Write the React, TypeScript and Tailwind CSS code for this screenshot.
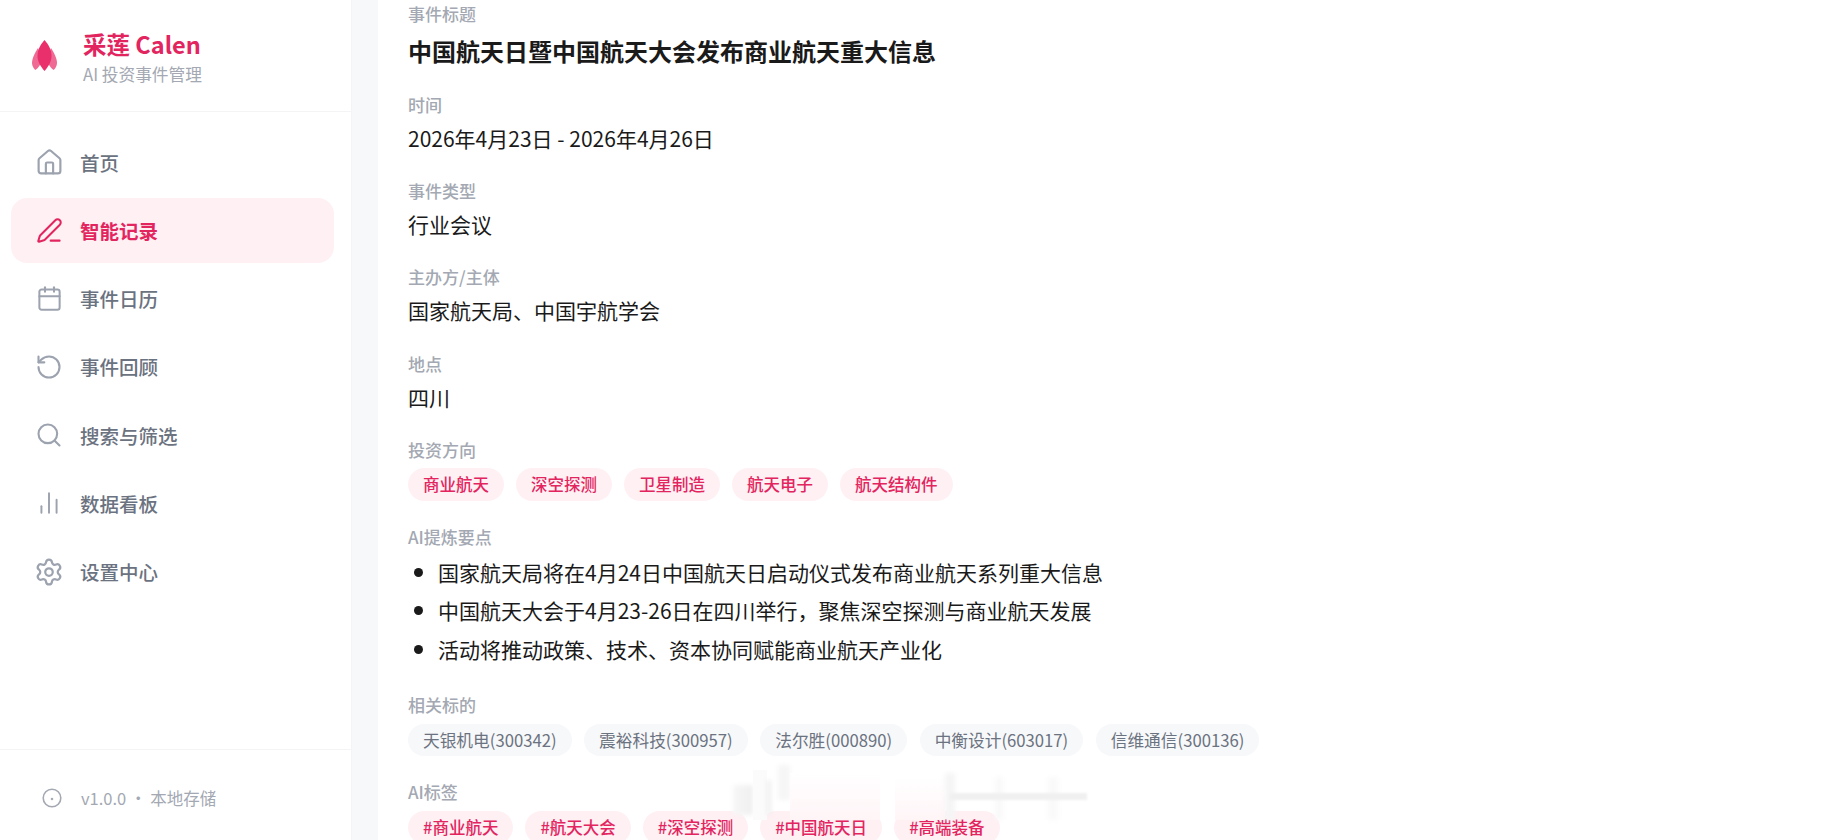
import { Calendar, ChartNoAxesColumn, Home, PenLine, RotateCcw, Search, Settings } from "lucide-react";

const navItems = [
  { label: "首页", icon: Home, size: 29 },
  { label: "智能记录", icon: PenLine, size: 27, active: true },
  { label: "事件日历", icon: Calendar, size: 27 },
  { label: "事件回顾", icon: RotateCcw, size: 28 },
  { label: "搜索与筛选", icon: Search, size: 28 },
  { label: "数据看板", icon: ChartNoAxesColumn, size: 26 },
  { label: "设置中心", icon: Settings, size: 32 },
];

const directions = ["商业航天", "深空探测", "卫星制造", "航天电子", "航天结构件"];
const points = [
  "国家航天局将在4月24日中国航天日启动仪式发布商业航天系列重大信息",
  "中国航天大会于4月23-26日在四川举行，聚焦深空探测与商业航天发展",
  "活动将推动政策、技术、资本协同赋能商业航天产业化",
];
const stocks = ["天银机电(300342)", "震裕科技(300957)", "法尔胜(000890)", "中衡设计(603017)", "信维通信(300136)"];
const tags = ["#商业航天", "#航天大会", "#深空探测", "#中国航天日", "#高端装备"];

const Label = ({ children }: { children: React.ReactNode }) => (
  <div className="text-[17px] leading-[24px] font-medium text-[#a3a8b2]">{children}</div>
);

const Value = ({ children }: { children: React.ReactNode }) => (
  <div className="mt-[7px] text-[21px] leading-[28px] text-[#1a1a1a]">{children}</div>
);

const Logo = () => (
  <svg width="25" height="31" viewBox="0 0 25 31">
    <path d="M6 8C2.500 13 0 19 0 23c0 3 2 6 3.500 7C5 29 6.500 27 8 25V14z" fill="#ef6a94" />
    <path d="M19 8c3.500 5 6 11 6 15 0 3-2 6-3.500 7-1.500-1-3-3-4.500-5V14z" fill="#ef6a94" />
    <path d="M12.500 0C8 5 5.500 10 5.500 16c0 6 3.500 11 7 15 3.500-4 7-9 7-15 0-6-2.500-11-7-16z" fill="#e92f6c" />
  </svg>
);

const Smudge = () => (
  <div className="pointer-events-none absolute left-[355px] top-[765px] h-[55px] w-[354px]">
    <div className="absolute left-0 top-[20px] h-[30px] w-[20px] bg-gradient-to-r from-[#f7f7f7] to-[#efefef] blur-[2px]" />
    <div className="absolute left-[20px] top-[5px] h-[50px] w-[14px] bg-[#fbfbfb]" />
    <div className="absolute left-[34px] top-[15px] h-[35px] w-[4px] bg-[#eeeeee] blur-[2px]" />
    <div className="absolute left-[45px] top-0 h-[35px] w-[12px] bg-[#f6f6f6] blur-[2px]" />
    <div className="absolute left-[57px] top-[8px] h-[47px] w-[90px] bg-gradient-to-b from-white to-[#fff5f7]" />
    <div className="absolute left-[162px] top-[12px] h-[43px] w-[50px] bg-gradient-to-b from-white to-[#fff5f7]" />
    <div className="absolute left-[212px] top-[8px] h-[47px] w-[10px] bg-[#f5f5f5] blur-[2px]" />
    <div className="absolute left-[262px] top-[12px] h-[43px] w-[8px] bg-[#f9f9f9] blur-[2px]" />
    <div className="absolute left-[315px] top-[12px] h-[43px] w-[10px] bg-[#f9f9f9] blur-[2px]" />
    <div className="absolute left-[217px] top-[28px] h-[7px] w-[137px] bg-[#f0f0f0] blur-[1px]" />
  </div>
);

const App = () => {
  return (
    <div className="flex h-[840px] w-[1824px] overflow-hidden bg-white font-['Noto_Sans_CJK_SC','Noto_Sans',sans-serif]">
      <aside className="flex w-[352px] shrink-0 flex-col border-r border-[#f3f4f6] bg-white">
        <div className="flex h-[112px] items-center gap-[26px] border-b border-[#f3f4f6] pl-[32px]">
          <Logo />
          <div className="pt-[3px]">
            <div className="text-[23.500px] leading-[32px] font-bold text-[#e2255f]">采莲 Calen</div>
            <div className="mt-[1.500px] text-[16.700px] leading-[24px] text-[#a3a8b2]">AI 投资事件管理</div>
          </div>
        </div>
        <nav className="flex flex-1 flex-col gap-[3.200px] pl-[11px] pr-[17px] pt-[18px]">
          {navItems.map((item) => {
            const Icon = item.icon;
            return (
              <div
                key={item.label}
                className={`flex h-[65px] items-center gap-[16px] rounded-[16px] pl-[23px] text-[19.500px] ${
                  item.active ? "bg-[#fff0f4] font-bold text-[#e2255f]" : "font-medium text-[#6b7280]"
                }`}
              >
                <span className="flex w-[30px] justify-center">
                  <Icon size={item.size} strokeWidth={1.8} className={item.active ? "text-[#e2255f]" : "text-[#9ca3af]"} />
                </span>
                {item.label}
              </div>
            );
          })}
        </nav>
        <div className="flex h-[91px] items-center gap-[19px] border-t border-[#f3f4f6] pl-[42px] pt-[6px] text-[16.500px] text-[#a3a8b2]">
          <svg width="20" height="20" viewBox="0 0 20 20" fill="none" stroke="#a3a8b2" strokeWidth="1.6">
            <circle cx="10" cy="10" r="8.800" />
            <circle cx="10" cy="11" r="0.500" fill="#a3a8b2" />
          </svg>
          <span>v1.0.0 ・ 本地存储</span>
        </div>
      </aside>
      <div className="w-[26px] shrink-0 bg-[#f7f8fa]" />
      <main className="relative flex-1 overflow-hidden pl-[30px] pt-[2px]">
        <Label>事件标题</Label>
        <div className="mt-[9px] text-[24px] leading-[32px] font-bold text-[#1a1a1a]">
          中国航天日暨中国航天大会发布商业航天重大信息
        </div>
        <div className="mt-[26px]">
          <Label>时间</Label>
          <Value>2026年4月23日 - 2026年4月26日</Value>
        </div>
        <div className="mt-[27px]">
          <Label>事件类型</Label>
          <Value>行业会议</Value>
        </div>
        <div className="mt-[27px]">
          <Label>主办方/主体</Label>
          <Value>国家航天局、中国宇航学会</Value>
        </div>
        <div className="mt-[28px]">
          <Label>地点</Label>
          <Value>四川</Value>
        </div>
        <div className="mt-[27px]">
          <Label>投资方向</Label>
          <div className="mt-[6px] flex gap-[12px]">
            {directions.map((tag) => (
              <span key={tag} className="flex h-[33px] items-center rounded-full bg-[#fff0f4] px-[15px] text-[16.500px] font-medium text-[#e2255f]">
                {tag}
              </span>
            ))}
          </div>
        </div>
        <div className="mt-[24px]">
          <Label>AI提炼要点</Label>
          <ul className="mt-[4px] text-[21px] leading-[38.400px] text-[#1a1a1a]">
            {points.map((point) => (
              <li key={point} className="flex items-center gap-[15px] pl-[6px]">
                <span className="h-[9px] w-[9px] shrink-0 rounded-full bg-[#1a1a1a]" />
                {point}
              </li>
            ))}
          </ul>
        </div>
        <div className="mt-[25px]">
          <Label>相关标的</Label>
          <div className="mt-[7px] flex gap-[12.500px]">
            {stocks.map((stock) => (
              <span key={stock} className="flex h-[32px] items-center rounded-full bg-[#f7f8fa] px-[15px] text-[16.700px] text-[#6b7280]">
                {stock}
              </span>
            ))}
          </div>
        </div>
        <div className="mt-[24px]">
          <Label>AI标签</Label>
          <div className="mt-[7px] flex gap-[12px]">
            {tags.map((tag) => (
              <span key={tag} className="flex h-[33px] items-center rounded-full bg-[#fff0f4] px-[15px] text-[16.500px] font-medium text-[#e2255f]">
                {tag}
              </span>
            ))}
          </div>
        </div>
        <Smudge />
      </main>
    </div>
  );
};
export default App;
